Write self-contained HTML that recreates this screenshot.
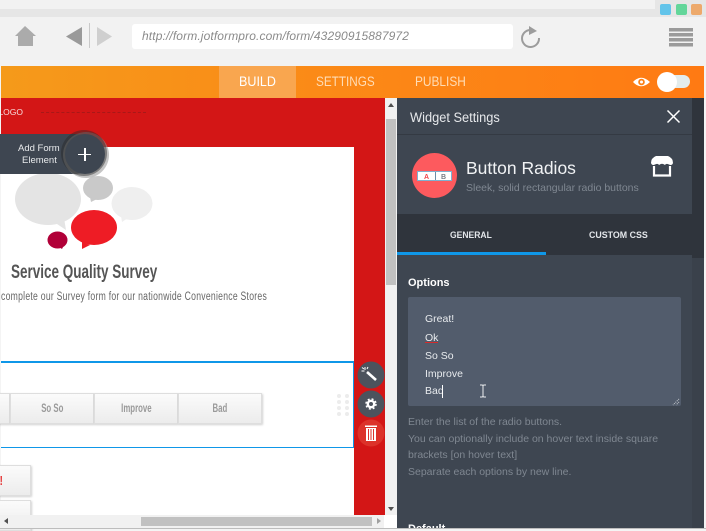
<!DOCTYPE html>
<html><head><meta charset="utf-8"><style>
*{box-sizing:border-box}
html,body{margin:0;padding:0;width:706px;height:530px;overflow:hidden;background:#f4f4f4;font-family:"Liberation Sans",sans-serif}
.a{position:absolute}
.t{position:absolute;white-space:nowrap;transform-origin:0 0}
.btn{position:absolute;background:linear-gradient(#fbfbfb,#ececec);border:1px solid #dedede;box-shadow:1px 1px 2px rgba(0,0,0,.18);text-align:center;font:bold 11.5px/30px "Liberation Sans",sans-serif;color:#9a9a9a}
.btn span{display:inline-block;transform:scaleX(.68)}
.help{font-size:10.5px;color:#7f8791}
.opt{font-size:10.5px;color:#e8ebee;left:425px}
</style></head><body>
<div class="a" style="left:0;top:0;width:706px;height:66px;background:#f2f2f2"></div>
<div class="a" style="left:0;top:9px;width:660px;height:8px;background:#e6e6e6"></div>
<div class="a" style="left:655px;top:0;width:51px;height:17px;background:#e6e6e6"></div>
<div class="a" style="left:660px;top:4px;width:11px;height:11px;background:#62c4ea;border-radius:2px"></div>
<div class="a" style="left:676px;top:4px;width:11px;height:11px;background:#63d69a;border-radius:2px"></div>
<div class="a" style="left:691px;top:4px;width:11px;height:11px;background:#eda96b;border-radius:2px"></div>

<svg class="a" style="left:0;top:0" width="706" height="66">
<path d="M25 26 L36 36 H33 V46 H18 V36 H15 Z" fill="#ababab"/>
<path d="M82 27 V46 L66 36.500 Z" fill="#9a9a9a"/>
<rect x="89" y="23" width="1" height="25" fill="#c9c9c9"/>
<path d="M97 27 V46 L112 36.500 Z" fill="#cfcfcf"/>
<path d="M495 29 L497.500 34.500 L504 35.200 L499.200 39.500 L500.500 45.500 L495 42.500 L489.500 45.500 L490.800 39.500 L486 35.200 L492.500 34.500 Z" fill="#ababab"/>
<path d="M530 30 A8.500 8.500 0 1 0 539 38" fill="none" stroke="#9c9c9c" stroke-width="2"/>
<path d="M529 26 L537 31 L529 35 Z" fill="#9c9c9c"/>
<rect x="669" y="28" width="24" height="3.500" fill="#9b9b9b"/>
<rect x="669" y="33" width="24" height="3.500" fill="#9b9b9b"/>
<rect x="669" y="38" width="24" height="3.500" fill="#9b9b9b"/>
<rect x="669" y="43" width="24" height="3.500" fill="#9b9b9b"/>
</svg>
<div class="a" style="left:132px;top:24px;width:381px;height:25px;background:#fff;border-radius:3px"></div>
<div class="t" style="left:142px;top:29px;font-size:12px;font-style:italic;color:#8a8a8a;letter-spacing:.12px">http://form.jotformpro.com/form/43290915887972</div>

<div class="a" style="left:1px;top:66px;width:705px;height:32px;background:linear-gradient(90deg,#f59a1a,#fb8a17 45%,#ff7a13)"></div>
<div class="a" style="left:219px;top:66px;width:77px;height:32px;background:#f9a64f"></div>
<div class="t" style="left:239px;top:74px;font-size:13.500px;color:#fff;transform:scaleX(.93)">BUILD</div>
<div class="t" style="left:316px;top:74px;font-size:13.500px;color:#ffdcb5;transform:scaleX(.87)">SETTINGS</div>
<div class="t" style="left:415px;top:74px;font-size:13.500px;color:#ffdcb5;transform:scaleX(.88)">PUBLISH</div>
<svg class="a" style="left:630px;top:72px" width="70" height="20">
<path d="M3 10 Q11 1.500 20 10 Q11 18.500 3 10 Z" fill="#fff"/><circle cx="11.500" cy="10" r="3.300" fill="#fd8015"/><circle cx="11.500" cy="10" r="1.500" fill="#fff"/>
<rect x="30" y="3" width="30" height="13" rx="6.500" fill="#e3ecec"/>
<circle cx="37" cy="10" r="10" fill="#fff"/>
</svg>

<div class="a" style="left:1px;top:98px;width:384px;height:427px;background:#d31616"></div>
<div class="t" style="left:1px;top:107px;font-size:8.500px;color:#f6dcdc;width:22px;overflow:hidden;direction:rtl">LOGO</div>
<div class="a" style="left:41px;top:112px;width:105px;border-top:1px dashed #a81818"></div>

<div class="a" style="left:1px;top:147px;width:353px;height:368px;background:#fff"></div>
<svg class="a" style="left:0;top:130px" width="200" height="125">
<ellipse cx="48" cy="69" rx="33" ry="26" fill="#e4e4e4"/><path d="M54 92 L66 100 L64 88 Z" fill="#e4e4e4"/>
<ellipse cx="98" cy="58" rx="15" ry="12" fill="#c9c9c9"/><path d="M90 67 L91 72 L97 69 Z" fill="#c9c9c9"/>
<ellipse cx="132" cy="73.500" rx="20.500" ry="16.500" fill="#efefef"/><path d="M121 86 L122 92 L128 88 Z" fill="#efefef"/>
<ellipse cx="94" cy="97.500" rx="23" ry="17.500" fill="#ee1c25"/><path d="M82 112 L82 119 L90 115 Z" fill="#ee1c25"/>
<ellipse cx="57.500" cy="110" rx="10" ry="8.500" fill="#b10038"/><path d="M59 117 L62 119 L64 115 Z" fill="#b10038"/>
</svg>
<div class="a" style="left:0;top:134px;width:96px;height:40px;background:#3e4651;border-radius:0 20px 20px 0"></div>
<div class="a" style="left:65px;top:134px;width:40px;height:40px;border-radius:50%;background:#3e4651;box-shadow:-1px -1px 0 3px rgba(40,40,40,.45),1px 1px 0 3px rgba(150,150,150,.55)"></div>
<div class="t" style="left:18px;top:143px;font-size:9.500px;color:#e8eaec">Add Form</div>
<div class="t" style="left:22px;top:155px;font-size:9.500px;color:#e8eaec">Element</div>
<div class="a" style="left:78px;top:153.500px;width:13px;height:1.500px;background:#fff"></div>
<div class="a" style="left:84px;top:148px;width:1.500px;height:13px;background:#fff"></div>

<div class="t" style="left:11px;top:262px;font:bold 19px/22px 'Liberation Sans',sans-serif;color:#555;transform:scaleX(.71)">Service Quality Survey</div>
<div class="t" style="left:1px;top:290px;font:11.500px/14px 'Liberation Sans',sans-serif;color:#666;letter-spacing:.35px;transform:scaleX(.75)">complete our Survey form for our nationwide Convenience Stores</div>

<div class="a" style="left:1px;top:361px;width:353px;height:87px;border-top:2px solid #0f97e8;border-bottom:1px solid #0f97e8;border-right:1px solid #0f97e8"></div>
<div class="btn" style="left:-20px;top:393px;width:30px;height:31px"></div>
<div class="btn" style="left:10px;top:393px;width:84px;height:31px"><span>So So</span></div>
<div class="btn" style="left:94px;top:393px;width:84px;height:31px"><span>Improve</span></div>
<div class="btn" style="left:178px;top:393px;width:84px;height:31px"><span>Bad</span></div>
<svg class="a" style="left:335px;top:393px" width="16" height="24" fill="#ececec">
<circle cx="4" cy="3" r="2"/><circle cx="12" cy="3" r="2"/><circle cx="4" cy="9" r="2"/><circle cx="12" cy="9" r="2"/><circle cx="4" cy="15" r="2"/><circle cx="12" cy="15" r="2"/><circle cx="4" cy="21" r="2"/><circle cx="12" cy="21" r="2"/>
</svg>
<div class="btn" style="left:-54px;top:465px;width:85px;height:31px;color:#e21b1b;text-align:right;padding-right:27px;font-size:13px"><span>!</span></div>
<div class="btn" style="left:-54px;top:500px;width:85px;height:31px"></div>

<svg class="a" style="left:355px;top:360px" width="30" height="90">
<circle cx="16" cy="15" r="13.500" fill="#4c535d"/>
<path d="M12 12 L21 20" stroke="#fff" stroke-width="2.600"/><path d="M10 7 V10 M6.500 11 H9.500 M13 7 L12 9 M7 7.500 L9 9" stroke="#fff" stroke-width="1"/>
<circle cx="16" cy="44" r="13.500" fill="#4c535d"/>
<circle cx="16" cy="44" r="3.200" fill="none" stroke="#fff" stroke-width="2.400"/><circle cx="16" cy="44" r="5" fill="none" stroke="#fff" stroke-width="1.500" stroke-dasharray="2 2"/>
<circle cx="16" cy="73" r="13.500" fill="#dc322a"/>
<rect x="11" y="68" width="10" height="13" fill="#fff"/><rect x="10" y="65.500" width="12" height="1.500" fill="#fff"/>
<path d="M13.500 69 V80 M16 69 V80 M18.500 69 V80" stroke="#dc322a" stroke-width="1"/>
</svg>

<div class="a" style="left:385px;top:98px;width:12px;height:417px;background:#f1f1f1"></div>
<div class="a" style="left:386px;top:119px;width:10px;height:166px;background:#c1c1c1"></div>
<div class="a" style="left:388px;top:103px;border:3px solid transparent;border-bottom:4px solid #505050;border-top:0"></div>
<div class="a" style="left:388px;top:507px;border:3px solid transparent;border-top:4px solid #505050;border-bottom:0"></div>
<div class="a" style="left:0;top:515px;width:384px;height:13px;background:#f1f1f1"></div>
<div class="a" style="left:384px;top:515px;width:13px;height:13px;background:#fff"></div>
<div class="a" style="left:141px;top:517px;width:231px;height:9px;background:#c1c1c1"></div>
<div class="a" style="left:4px;top:518px;border:3px solid transparent;border-right:4px solid #505050;border-left:0"></div>
<div class="a" style="left:377px;top:518px;border:3px solid transparent;border-left:4px solid #a0a0a0;border-right:0"></div>

<div class="a" style="left:397px;top:98px;width:307px;height:430px;background:#3e4651;overflow:hidden"></div>
<div class="a" style="left:692px;top:98px;width:12px;height:160px;background:#2f343c"></div>
<div class="a" style="left:692px;top:258px;width:12px;height:270px;background:#3a414b"></div>
<div class="a" style="left:704px;top:66px;width:2px;height:464px;background:#f4f4f4"></div>
<div class="a" style="left:397px;top:134px;width:295px;height:1px;background:#343a43"></div>
<div class="t" style="left:410px;top:110px;font-size:13.500px;color:#e6e8eb;transform:scaleX(.95)">Widget Settings</div>
<svg class="a" style="left:666px;top:109px" width="15" height="15"><path d="M1.500 1.500 L13.500 13.500 M13.500 1.500 L1.500 13.500" stroke="#fff" stroke-width="1.500"/></svg>

<svg class="a" style="left:412px;top:153px" width="46" height="46">
<circle cx="22.500" cy="22.500" r="22.500" fill="#fd5a5e"/>
<rect x="5.500" y="18.500" width="34" height="9" fill="#fff" stroke="#7fb0cf" stroke-width="1"/>
<rect x="23" y="19" width="1" height="8" fill="#6a8ea8"/>
<text x="14.500" y="26" font-size="7" font-weight="bold" text-anchor="middle" fill="#f0454c" font-family="Liberation Sans, sans-serif">A</text>
<text x="31.500" y="26" font-size="7" font-weight="bold" text-anchor="middle" fill="#777c84" font-family="Liberation Sans, sans-serif">B</text>
</svg>
<div class="t" style="left:466px;top:158px;font-size:17.500px;color:#f0f2f4">Button Radios</div>
<div class="t" style="left:466px;top:182px;font-size:10.500px;color:#7f8791">Sleek, solid rectangular radio buttons</div>
<svg class="a" style="left:650px;top:155px" width="24" height="22">
<path d="M6 1 H18 Q23 3 23 8 Q22 11 19 9.500 Q16 8 15 10 Q12 7.500 9 10 Q8 8 5 9.500 Q2 11 1 8 Q1 3 6 1 Z" fill="#fff"/>
<path d="M4 11 V20.500 H20 V11" fill="none" stroke="#fff" stroke-width="2.200"/>
</svg>

<div class="a" style="left:397px;top:214px;width:295px;height:41px;background:#2f343c"></div>
<div class="a" style="left:397px;top:252px;width:149px;height:3px;background:#0f97e8"></div>
<div class="t" style="left:450px;top:230px;font-size:9.500px;font-weight:bold;color:#e3e6ea;transform:scaleX(.9)">GENERAL</div>
<div class="t" style="left:589px;top:230px;font-size:9.500px;font-weight:bold;color:#e3e6ea;transform:scaleX(.93)">CUSTOM CSS</div>
<div class="t" style="left:408px;top:277px;font-size:11px;font-weight:bold;color:#fff">Options</div>

<div class="a" style="left:408px;top:297px;width:273px;height:109px;background:#525c6c;border-radius:2px"></div>
<div class="t opt" style="top:313px">Great!</div>
<div class="t opt" style="top:331.500px">Ok</div>
<div class="a" style="left:425px;top:342px;width:13px;height:1px;background:#d42a2a"></div>
<div class="t opt" style="top:350px">So So</div>
<div class="t opt" style="top:368px">Improve</div>
<div class="t opt" style="top:385px">Bad</div>
<div class="a" style="left:442px;top:385px;width:1px;height:13px;background:#fff"></div>
<svg class="a" style="left:478px;top:384px" width="10" height="15"><path d="M2 1 H4 Q5 1 5 2 V12 Q5 13 4 13 H2 M8 1 H6 Q5 1 5 2 M5 12 Q5 13 6 13 H8" fill="none" stroke="#eceef0" stroke-width="1"/></svg>
<svg class="a" style="left:672px;top:398px" width="8" height="8"><path d="M7 1 L1 7 M7 4 L4 7" stroke="#c5c9ce" stroke-width="1" stroke-dasharray="1 1"/></svg>

<div class="t help" style="left:408px;top:416px">Enter the list of the radio buttons.</div>
<div class="t help" style="left:408px;top:433px">You can optionally include on hover text inside square</div>
<div class="t help" style="left:408px;top:449px">brackets [on hover text]</div>
<div class="t help" style="left:408px;top:466px">Separate each options by new line.</div>
<div class="a" style="left:397px;top:515px;width:295px;height:13px;overflow:hidden"><div class="t" style="left:11px;top:8px;font-size:11px;font-weight:bold;color:#fff">Default</div></div>
<div class="a" style="left:0;top:528px;width:706px;height:1px;background:#bdbdbd"></div>
</body></html>
